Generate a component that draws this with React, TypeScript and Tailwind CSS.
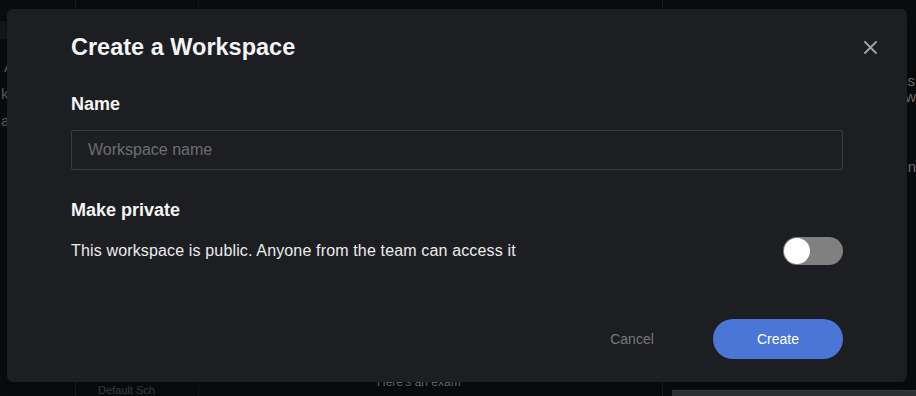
export default function App() {
  return (
    <div
      className="relative w-[916px] h-[396px] overflow-hidden bg-[#0a0b0d]"
      style={{ fontFamily: '"Liberation Sans", Arial, sans-serif' }}
    >
      {/* page behind the dialog */}
      <div className="flex h-full w-full">
        <aside className="w-[76px] shrink-0 border-r border-[#1a1b1e] flex flex-col">
          <div className="mt-[21px] h-[18px] bg-[#151619]"></div>
          <div className="mt-[14px] pl-[4px] text-[15px] leading-[27px] text-[#5a5b5f]">All</div>
          <div className="pl-[1px] text-[15px] leading-[27px] text-[#5a5b5f]">kflow</div>
          <div className="pl-[1px] text-[15px] leading-[27px] text-[#5a5b5f]">at</div>
        </aside>
        <div className="w-[123px] shrink-0 border-r border-[#141518] flex flex-col justify-end">
          <div className="pl-[22px] text-[11px] leading-[12px] text-[#3c3d41]">Default Sch</div>
        </div>
        <main className="w-[464px] shrink-0 border-r border-[#1a1b1e] flex flex-col justify-end pb-[7px]">
          <div className="pl-[178px] text-[12px] leading-[14px] text-[#6a6b6f]">Here's an exam</div>
        </main>
        <div className="flex-1 flex flex-col">
          <div className="mt-[73px] text-right pr-[1px] text-[15px] leading-[16px] text-[#6a6b6f]">s</div>
          <div className="text-right text-[15px] leading-[15px] text-[#6a6b6f]">w</div>
          <div className="mt-[55px] text-right text-[15px] leading-[16px] text-[#6a6b6f]">n</div>
          <div className="mt-auto ml-[9px] h-[6px] bg-[#2e2f32] border-t border-[#3a3b3e]"></div>
        </div>
      </div>

      {/* dialog */}
      <div className="absolute left-[7px] top-[9px] w-[900px] h-[373px] rounded-md bg-[#1d1e22] shadow-lg">
        <button className="absolute top-[32px] right-[30px] w-[13px] h-[13px]">
          <svg width="13" height="13" viewBox="0 0 13 13" fill="none">
            <path d="M1 1L12 12M12 1L1 12" stroke="#a3a4a8" strokeWidth="1.8" strokeLinecap="round" />
          </svg>
        </button>
        <div className="flex flex-col px-16 pt-6">
          <h2 className="text-[23.5px] leading-[28px] font-bold text-[#f5f5f5]">Create a Workspace</h2>

          <label className="mt-[31px] text-[18px] leading-[24px] font-bold text-[#f5f5f5]">Name</label>
          <input
            placeholder="Workspace name"
            className="mt-[14px] h-[40px] w-full rounded-[2px] border border-[#3a3b3f] bg-transparent px-4 text-[16px] text-white placeholder:text-[#6c6d71] outline-none"
          />

          <div className="mt-[28px] text-[18px] leading-[24px] font-bold text-[#f5f5f5]">Make private</div>
          <div className="mt-[15px] flex h-[28px] items-center justify-between">
            <span className="text-[16px] leading-[24px] tracking-[0.15px] text-[#ececec]">
              This workspace is public. Anyone from the team can access it
            </span>
            <div className="flex h-[28px] w-[60px] items-center rounded-full bg-[#808080] px-[1px]">
              <div className="h-[26px] w-[26px] rounded-full bg-white"></div>
            </div>
          </div>

          <div className="mt-[54px] flex justify-end gap-4">
            <button className="h-[40px] w-[130px] text-[14px] text-[#77787c]">Cancel</button>
            <button className="h-[40px] w-[130px] rounded-full bg-[#4a76d8] text-[14px] text-white">Create</button>
          </div>
        </div>
      </div>
    </div>
  );
}
